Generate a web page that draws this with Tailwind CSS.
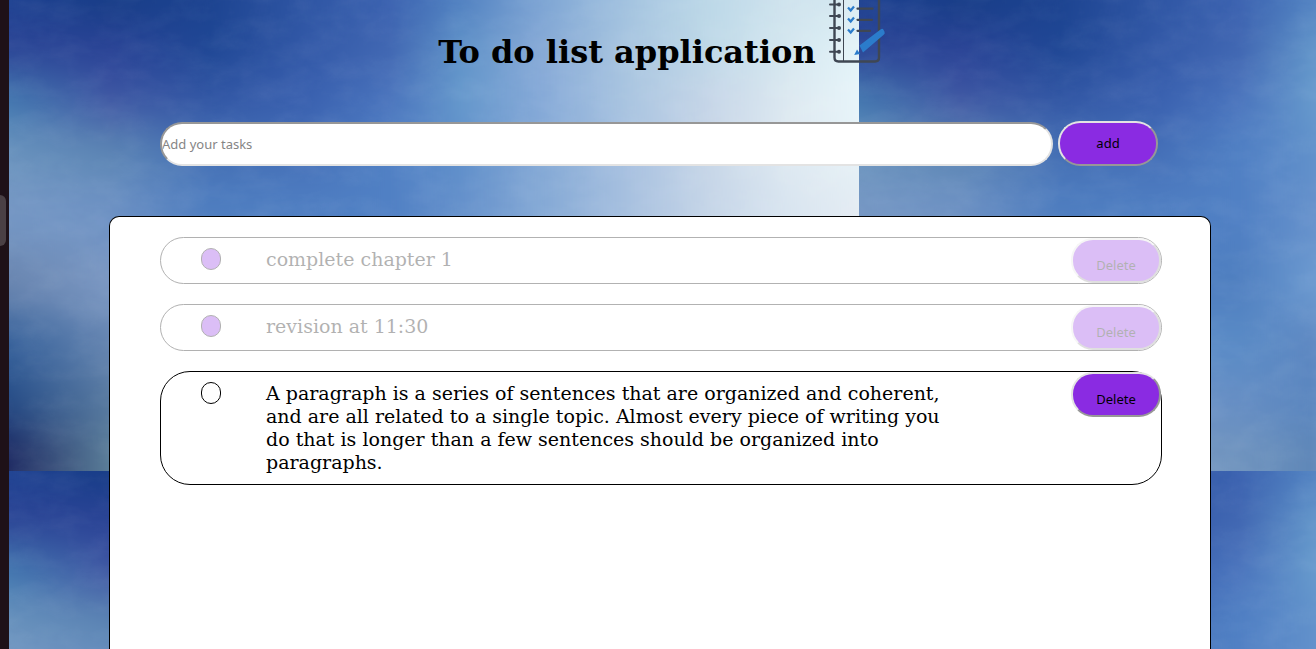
<!DOCTYPE html>
<html lang="en">
<head>
<meta charset="utf-8">
<meta name="viewport" content="width=device-width, initial-scale=1">
<title>To do list application</title>
<script src="https://cdn.jsdelivr.net/npm/@tailwindcss/browser@4"></script>
</head>
<body class="flex min-h-screen bg-[#1e1118] text-black font-['DejaVu_Serif',serif]">
  <!-- Dock edge -->
  <aside class="w-[9px] shrink-0 pt-[195px]" aria-hidden="true">
    <div class="h-[51px] w-1.5 rounded-r-lg bg-[#4a4045]"></div>
  </aside>

  <div class="relative isolate flex min-w-0 flex-1 flex-col">
    <!-- Painted sky, tiled -->
    <svg class="absolute inset-0 -z-10 h-full w-full" aria-hidden="true">
      <defs id="sky-defs">
        <filter id="soften" filterUnits="userSpaceOnUse" x="-100" y="-150" width="1050" height="800" color-interpolation-filters="sRGB">
          <feGaussianBlur stdDeviation="0 20"/>
        </filter>
        <filter id="brush" x="0" y="0" width="100%" height="100%" color-interpolation-filters="sRGB">
          <feTurbulence type="fractalNoise" baseFrequency="0.03 0.05" numOctaves="5" seed="8"/>
          <feColorMatrix values="0 0 0 0 1  0 0 0 0 1  0 0 0 0 1  0.9 0 0 0 -0.35"/>
        </filter>
        <pattern id="sky" width="850" height="471" patternUnits="userSpaceOnUse">
          <g id="bands" filter="url(#soften)"></g>
          <rect width="850" height="471" filter="url(#brush)" opacity="0.1"/>
        </pattern>
      </defs>
      <rect width="100%" height="100%" fill="url(#sky)"/>
    </svg>

    <header class="flex h-16 items-end justify-center gap-[11px]">
      <h1 class="text-[32px] leading-6 font-bold whitespace-nowrap">To do list application</h1>
      <svg class="h-16 w-[60px] shrink-0" viewBox="827 0 60 64" fill="none" role="img" aria-label="Notebook">
        <path d="M834.5 -4V57.500q0 4 4 4H875q4 0 4-4V-4" stroke="#3f4753" stroke-width="2.4"/>
        <path d="M836 -4v64h23V-4z" fill="#fff" fill-opacity=".15"/>
        <path d="M843.5 -4V61" stroke="#3f4753" stroke-width="1"/>
        <path d="M830 4.5h9M830 16h9M830 28h9M830 40h9M830 51.700h9" stroke="#3f4753" stroke-width="2" stroke-linecap="round"/>
        <g fill="#3f4753"><circle cx="839" cy="4.500" r="2"/><circle cx="839" cy="16" r="2"/><circle cx="839" cy="28" r="2"/><circle cx="839" cy="40" r="2"/><circle cx="839" cy="51.700" r="2"/></g>
        <path d="M857.500 8.700h15M857.500 19.800h14.500M857.500 30.800h12.500" stroke="#3f4753" stroke-width="2.200" stroke-linecap="round"/>
        <path d="M848 7.500l2.700 3 3.300-4M848 18.500l2.700 3 3.300-4M848 29.500l2.700 3 3.300-4" stroke="#2b7ccb" stroke-width="2.200"/>
        <path d="M859.500 45.500L880.500 29.500q2-1.500 3 .2l1 2q.8 1.800-.8 3L863 52.500z" fill="#2b7ccb"/>
        <path d="M857 49.500L854.200 55l6-1z" fill="#2b7ccb"/>
      </svg>
    </header>

    <form class="mt-[57px] mr-[158px] ml-[151px] flex items-end gap-[5px] font-['Noto_Sans',sans-serif] text-[13px]" onsubmit="return false">
      <input type="text" aria-label="Add your tasks" placeholder="Add your tasks" class="h-11 min-w-0 flex-1 rounded-[22px] border-2 border-t-[#979797] border-r-[#e3e3e3] border-b-[#e3e3e3] border-l-[#979797] bg-white p-0 placeholder:text-[#858585]">
      <button type="submit" class="h-[45px] w-[100px] rounded-[22px] border-2 border-t-[#e3e3e3] border-r-[#979797] border-b-[#979797] border-l-[#e3e3e3] bg-[#8a2be2]">add</button>
    </form>

    <main class="mt-[50px] mr-[105px] ml-[100px] flex-1 rounded-t-[10px] border border-b-0 border-black bg-white px-[50px] pt-5 pr-12 pb-16">
      <ul class="flex flex-col gap-5">
        <li class="flex min-h-[47px] items-start rounded-[30px] border border-black pl-10 opacity-30">
          <input id="task1" type="checkbox" checked class="mt-2.5 h-[22px] w-5 shrink-0 appearance-none rounded-[10px] border border-black checked:bg-[#8a2be2]">
          <label for="task1" class="ml-[45px] max-w-[700px] flex-1 py-2.5 text-[19px] leading-[23px]">complete chapter 1</label>
          <button type="button" class="ml-auto h-[45px] w-[90px] shrink-0 rounded-[22px] border-2 border-t-[#e3e3e3] border-r-[#979797] border-b-[#979797] border-l-[#e3e3e3] bg-[#8a2be2] pt-2.5 font-['Noto_Sans',sans-serif] text-[13px]">Delete</button>
        </li>
        <li class="flex min-h-[47px] items-start rounded-[30px] border border-black pl-10 opacity-30">
          <input id="task2" type="checkbox" checked class="mt-2.5 h-[22px] w-5 shrink-0 appearance-none rounded-[10px] border border-black checked:bg-[#8a2be2]">
          <label for="task2" class="ml-[45px] max-w-[700px] flex-1 py-2.5 text-[19px] leading-[23px]">revision at 11:30</label>
          <button type="button" class="ml-auto h-[45px] w-[90px] shrink-0 rounded-[22px] border-2 border-t-[#e3e3e3] border-r-[#979797] border-b-[#979797] border-l-[#e3e3e3] bg-[#8a2be2] pt-2.5 font-['Noto_Sans',sans-serif] text-[13px]">Delete</button>
        </li>
        <li class="flex min-h-[47px] items-start rounded-[30px] border border-black pl-10">
          <input id="task3" type="checkbox" class="mt-2.5 h-[22px] w-5 shrink-0 appearance-none rounded-[10px] border border-black checked:bg-[#8a2be2]">
          <label for="task3" class="ml-[45px] max-w-[700px] flex-1 py-2.5 text-[19px] leading-[23px]">A paragraph is a series of sentences that are organized and coherent, and are all related to a single topic. Almost every piece of writing you do that is longer than a few sentences should be organized into paragraphs.</label>
          <button type="button" class="ml-auto h-[45px] w-[90px] shrink-0 rounded-[22px] border-2 border-t-[#e3e3e3] border-r-[#979797] border-b-[#979797] border-l-[#e3e3e3] bg-[#8a2be2] pt-2.5 font-['Noto_Sans',sans-serif] text-[13px]">Delete</button>
        </li>
      </ul>
    </main>
  </div>

<script>
  // Each band is a horizontal gradient; the vertical blur melts them together.
  const stops = [0, 100, 200, 300, 380, 450, 530, 620, 700, 780, 850];
  const bands = [
    [-120, 25, "1c4090 173d87 1c4390 2f56a4 3b62b0 4f7fc0 7ba3d3 a3c3e0 bcd8e8 cfe3ee d3e8f0"],
    [25, 75, "2d4596 2a4396 1f4795 3359a8 4167b2 5f92c8 86a9d6 a9c6e0 bfd9e8 d5e8f0 e2f3f8"],
    [75, 125, "4278b0 4058a4 3357a5 3a61b0 4a74bd 6598cc 85a9d8 abc6e1 c6d5e8 dde9f1 e8f5fa"],
    [125, 180, "6a93bd 5c86b4 446fb4 4570b8 5080c4 5f8fca 83a8d5 a8c1e0 c8d7e8 dfeaf2 e6f2f7"],
    [180, 250, "7597c4 6e92c4 4f7ec0 4f7ec2 5080c4 6490cb 83a8d5 a8c1e0 c5d5e8 d9e5f0 e4ecf3"],
    [250, 315, "6a86b0 7a97c2 6a90c4 4f7fc0 4f7fc0 6a98cf 83a8d5 a8c1e0 c5d5e8 d9e5f0 e4ecf3"],
    [315, 375, "35609a 6484b0 6a90c4 5a8bc6 5a8bc6 5d88c2 83a8d5 a8c1e0 c5d5e8 d9e5f0 e4ecf3"],
    [375, 430, "274d87 56789f 6a90c4 6a90c4 668ec4 5a86bf 83a8d5 a8c1e0 c5d5e8 d9e5f0 e4ecf3"],
    [430, 600, "1e2a62 5a7d98 6a90c4 7698c0 7094be 6088b8 83a8d5 a8c1e0 c5d5e8 d9e5f0 e4ecf3"]
  ];
  const NS = "http://www.w3.org/2000/svg";
  const make = (name, attrs, parent) => {
    const node = document.createElementNS(NS, name);
    for (const key in attrs) node.setAttribute(key, attrs[key]);
    return parent.appendChild(node);
  };
  bands.forEach(([top, bottom, colours], i) => {
    const gradient = make("linearGradient", { id: "band" + i, gradientUnits: "userSpaceOnUse", x1: 0, x2: 850, y1: 0, y2: 0 }, document.getElementById("sky-defs"));
    colours.split(" ").forEach((c, j) => make("stop", { offset: stops[j] / 850, "stop-color": "#" + c }, gradient));
    make("rect", { x: -50, y: top, width: 950, height: bottom - top, fill: "url(#band" + i + ")" }, document.getElementById("bands"));
  });
</script>
</body>
</html>
